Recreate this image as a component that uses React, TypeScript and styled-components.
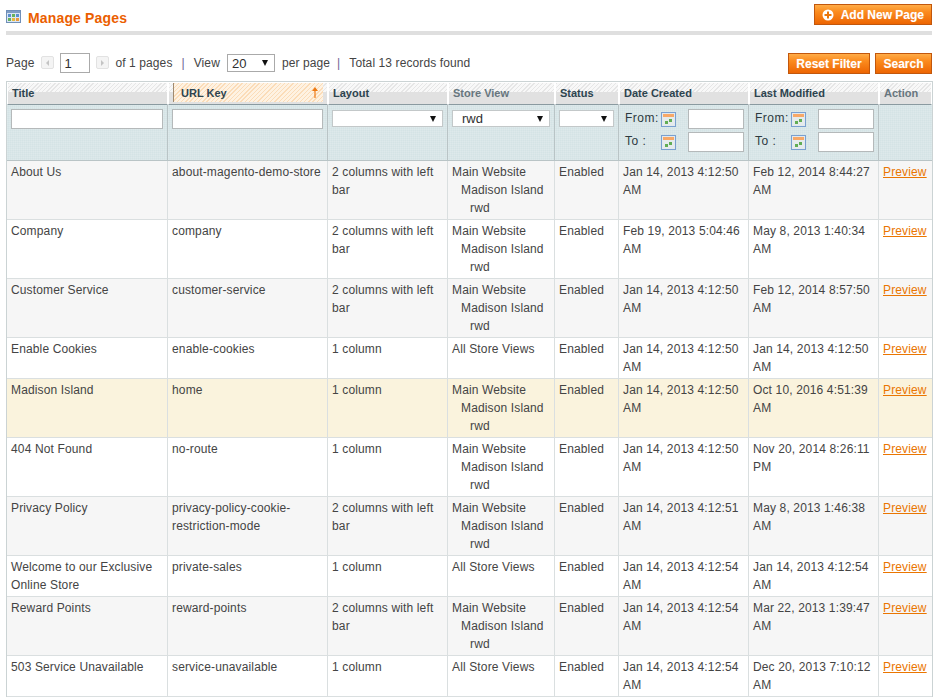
import React, { FC } from 'react';
import styled, { createGlobalStyle } from 'styled-components';

type PageRow = {
  title: string;
  urlKey: string;
  layout: string;
  stores: string[];
  created: string;
  modified: string;
  tint?: 'plain' | 'even' | 'home';
};

const MAIN_STORE = ['Main Website', 'Madison Island', 'rwd'];
const ALL_STORES = ['All Store Views'];
const TWO_COL = '2 columns with left bar';

const pages: PageRow[] = [
  { title: 'About Us', urlKey: 'about-magento-demo-store', layout: TWO_COL, stores: MAIN_STORE, created: 'Jan 14, 2013 4:12:50 AM', modified: 'Feb 12, 2014 8:44:27 AM', tint: 'even' },
  { title: 'Company', urlKey: 'company', layout: TWO_COL, stores: MAIN_STORE, created: 'Feb 19, 2013 5:04:46 AM', modified: 'May 8, 2013 1:40:34 AM' },
  { title: 'Customer Service', urlKey: 'customer-service', layout: TWO_COL, stores: MAIN_STORE, created: 'Jan 14, 2013 4:12:50 AM', modified: 'Feb 12, 2014 8:57:50 AM', tint: 'even' },
  { title: 'Enable Cookies', urlKey: 'enable-cookies', layout: '1 column', stores: ALL_STORES, created: 'Jan 14, 2013 4:12:50 AM', modified: 'Jan 14, 2013 4:12:50 AM' },
  { title: 'Madison Island', urlKey: 'home', layout: '1 column', stores: MAIN_STORE, created: 'Jan 14, 2013 4:12:50 AM', modified: 'Oct 10, 2016 4:51:39 AM', tint: 'home' },
  { title: '404 Not Found', urlKey: 'no-route', layout: '1 column', stores: MAIN_STORE, created: 'Jan 14, 2013 4:12:50 AM', modified: 'Nov 20, 2014 8:26:11 PM' },
  { title: 'Privacy Policy', urlKey: 'privacy-policy-cookie-restriction-mode', layout: TWO_COL, stores: MAIN_STORE, created: 'Jan 14, 2013 4:12:51 AM', modified: 'May 8, 2013 1:46:38 AM', tint: 'even' },
  { title: 'Welcome to our Exclusive Online Store', urlKey: 'private-sales', layout: '1 column', stores: ALL_STORES, created: 'Jan 14, 2013 4:12:54 AM', modified: 'Jan 14, 2013 4:12:54 AM' },
  { title: 'Reward Points', urlKey: 'reward-points', layout: TWO_COL, stores: MAIN_STORE, created: 'Jan 14, 2013 4:12:54 AM', modified: 'Mar 22, 2013 1:39:47 AM', tint: 'even' },
  { title: '503 Service Unavailable', urlKey: 'service-unavailable', layout: '1 column', stores: ALL_STORES, created: 'Jan 14, 2013 4:12:54 AM', modified: 'Dec 20, 2013 7:10:12 AM' },
];

const columnWidths = [161, 160, 120, 107, 64, 130, 130, 53];

const GlobalStyle = createGlobalStyle`
  html, body {
    margin: 0;
    padding: 0;
    background: #fff;
    overflow: hidden;
  }
  body {
    font: 12px/18px "Liberation Sans", Arial, sans-serif;
    color: #444;
  }
`;

const Page = styled.div`
  width: 926px;
  height: 700px;
  padding: 0 8px 0 6px;
  overflow: hidden;
`;

const TitleBar = styled.div`
  display: flex;
  justify-content: space-between;
  align-items: flex-start;
  height: 27px;
  padding-top: 4px;
  border-bottom: 4px solid #dfdfdf;
`;

const Heading = styled.div`
  display: flex;
  align-items: center;
  gap: 7px;
  height: 20px;
  margin-top: 4px;
`;

const HeadingText = styled.h3`
  margin: 0;
  font-size: 14px;
  line-height: 18px;
  font-weight: 700;
  letter-spacing: 0.15px;
  color: #eb5e00;
`;

const GridIconSvg = styled.svg`
  margin-bottom: 3px;
`;

const OrangeButton = styled.button`
  display: inline-flex;
  align-items: center;
  justify-content: center;
  gap: 7px;
  height: 21px;
  padding: 0 7px;
  box-sizing: border-box;
  border: 1px solid #c2570c;
  background: linear-gradient(#ffac47 0%, #fb8c1f 35%, #ed6502 100%);
  color: #fff;
  font: 700 12px/18px "Liberation Sans", Arial, sans-serif;
  text-shadow: 0 0 1px rgba(255, 255, 255, 0.35);
`;

const ResetButton = styled(OrangeButton)`
  width: 82px;
  padding: 0;
`;

const SearchButton = styled(OrangeButton)`
  width: 57px;
  padding: 0;
`;

const PagerRow = styled.div`
  display: flex;
  justify-content: space-between;
  align-items: center;
  height: 27px;
  margin-top: 15px;
`;

const Pager = styled.div`
  display: flex;
  align-items: center;
  height: 22px;
  margin-bottom: 2px;
  letter-spacing: 0.1px;
`;

const PagerArrow = styled.span<{ $first?: boolean }>`
  display: inline-flex;
  align-items: center;
  justify-content: center;
  width: 11px;
  height: 11px;
  border: 1px solid #e2e2e2;
  border-radius: 2px;
  background: #f4f4f4;
  margin: 0 6px 0 ${p => (p.$first ? 7 : 0)}px;
`;

const PageInput = styled.div`
  width: 25px;
  height: 18px;
  border: 1px solid #aaa;
  padding-left: 3px;
  margin: 0 6px 0 0;
  color: #2f2f2f;
  font-size: 13px;
  line-height: 19px;
  background: #fff;
`;

const PerPage = styled.div`
  position: relative;
  width: 42px;
  height: 16px;
  border: 1px solid #aaa;
  padding-left: 4px;
  margin: 0 7px;
  font-size: 13px;
  line-height: 17px;
  color: #2f2f2f;
  background: #fff;
`;

const Separator = styled.span<{ $left: number; $right: number }>`
  margin: 0 ${p => p.$right}px 0 ${p => p.$left}px;
  color: #6f5f95;
`;

const FilterButtons = styled.div`
  display: flex;
  gap: 5px;
`;

const SelectArrow = styled.i`
  position: absolute;
  top: 5px;
  right: 6px;
  width: 0;
  height: 0;
  border-left: 3.5px solid transparent;
  border-right: 3.5px solid transparent;
  border-top: 6px solid #111;
`;

const Grid = styled.table`
  margin-top: 4px;
  width: 926px;
  table-layout: fixed;
  border-collapse: separate;
  border-spacing: 0;
  border-left: 1px solid #cbd3d4;
  border-right: 1px solid #cbd3d4;
  border-top: 1px solid #cbd3d4;
`;

const HeadCell = styled.th<{ $muted?: boolean }>`
  position: relative;
  height: 23px;
  padding: 0 0 0 4px;
  box-sizing: border-box;
  text-align: left;
  font-size: 11px;
  line-height: 21px;
  font-weight: 700;
  color: ${p => (p.$muted ? '#67767e' : '#2d444f')};
  background:
    linear-gradient(transparent 9px, #e1e1e1 9px),
    repeating-linear-gradient(135deg, #e6e6e6 0 1px, #f8f8f8 1px 3px);
  border-left: 1px solid #fff;
  border-right: 1px solid #fff;
  border-top: 1px solid #fff;
  border-bottom: 1px solid #8a9aa0;
`;

const SortedLabel = styled.div`
  position: absolute;
  top: 0;
  left: 4px;
  right: 4px;
  bottom: 2px;
  padding-left: 7px;
  line-height: 21px;
  color: #2d444f;
  border-left: 1px solid #a08a70;
  background: repeating-linear-gradient(135deg, #fbdcb8 0 1px, #fef2e2 1px 3px);
`;

const SortArrow = styled.svg`
  position: absolute;
  top: 4px;
  right: 5px;
`;

const FilterCell = styled.th`
  height: 56px;
  padding: 4px 4px 0 4px;
  box-sizing: border-box;
  vertical-align: top;
  font-weight: 400;
  text-align: left;
  background:
    repeating-linear-gradient(0deg, rgba(255, 255, 255, 0.12) 0 1px, transparent 1px 2px),
    repeating-linear-gradient(90deg, rgba(255, 255, 255, 0.12) 0 1px, transparent 1px 2px),
    #d4e3e5;
  border-right: 1px solid #b9c4c6;
  border-bottom: 1px solid #b9c4c6;
  &:last-child {
    border-right: 0;
  }
`;

const FilterInput = styled.div<{ $width?: number }>`
  width: ${p => (p.$width ? `${p.$width}px` : '100%')};
  height: 20px;
  box-sizing: border-box;
  border: 1px solid #b5b9ba;
  background: #fff;
`;

const FilterSelect = styled.div<{ $width: number }>`
  position: relative;
  width: ${p => p.$width}px;
  height: 17px;
  margin-top: 1px;
  padding-left: 9px;
  box-sizing: border-box;
  border: 1px solid #c3c8c9;
  background: #fff;
  color: #2f2f2f;
  font-size: 13px;
  line-height: 16px;
`;

const DateLine = styled.div`
  display: flex;
  align-items: center;
  height: 20px;
  margin-bottom: 3px;
  padding-left: 2px;
`;

const DateLabel = styled.span`
  width: 36px;
  padding-bottom: 2px;
  font-size: 12px;
  font-weight: 400;
  letter-spacing: 0.5px;
  color: #2d3a40;
`;

const DateField = styled(FilterInput)`
  margin-left: 12px;
`;

const BodyCell = styled.td<{ $tint?: PageRow['tint'] }>`
  padding: 2px 4px 2px 4px;
  vertical-align: top;
  letter-spacing: 0.14px;
  overflow-wrap: break-word;
  border-right: 1px solid #dadfe0;
  border-bottom: 1px solid #dadfe0;
  background: ${p => (p.$tint === 'home' ? '#faf3dd' : p.$tint === 'even' ? '#f6f6f6' : '#fff')};
  &:last-child {
    border-right: 0;
  }
`;

const StoreLine = styled.div<{ $depth: number }>`
  padding-left: ${p => p.$depth * 9}px;
`;

const PreviewLink = styled.a`
  color: #ea7601;
  text-decoration: underline;
`;

const GridIcon: FC = () => (
  <GridIconSvg width="15" height="13" viewBox="0 0 15 13">
    <rect x="0.5" y="0.5" width="14" height="12" fill="#dbe6f4" stroke="#6f8fb8" />
    <rect x="1" y="1" width="13" height="2" fill="#7f9cc4" />
    <rect x="2" y="4" width="3" height="3" fill="#5a8fd0" />
    <rect x="6" y="4" width="3" height="3" fill="#68b25a" />
    <rect x="10" y="4" width="3" height="3" fill="#5a8fd0" />
    <rect x="2" y="8" width="3" height="3" fill="#68b25a" />
    <rect x="6" y="8" width="3" height="3" fill="#e8b93e" />
    <rect x="10" y="8" width="3" height="3" fill="#e89a3e" />
  </GridIconSvg>
);

const PlusIcon: FC = () => (
  <svg width="12" height="12" viewBox="0 0 12 12">
    <circle cx="6" cy="6" r="5.5" fill="#fff" />
    <rect x="2.5" y="5" width="7" height="2" fill="#e9760c" />
    <rect x="5" y="2.5" width="2" height="7" fill="#e9760c" />
  </svg>
);

const CalendarIcon: FC = () => (
  <svg width="15" height="15" viewBox="0 0 15 15">
    <rect x="0.5" y="0.5" width="14" height="14" fill="#e3e9ee" stroke="#7aa0d0" />
    <rect x="2" y="2" width="11" height="3" fill="#f7a868" />
    <rect x="2" y="5" width="11" height="8" fill="#e6ebec" />
    <rect x="4" y="9" width="3" height="3" fill="#62ad55" />
    <rect x="8" y="7" width="3" height="3" fill="#62ad55" />
  </svg>
);

const ArrowBox: FC<{ dir: 'left' | 'right' }> = ({ dir }) => (
  <PagerArrow $first={dir === 'left'}>
    <svg width="5" height="6" viewBox="0 0 5 6">
      <path d={dir === 'left' ? 'M4 0 L1 3 L4 6 Z' : 'M1 0 L4 3 L1 6 Z'} fill="#c4c4c4" />
    </svg>
  </PagerArrow>
);

const DateFilter: FC = () => (
  <>
    <DateLine>
      <DateLabel>From:</DateLabel>
      <CalendarIcon />
      <DateField $width={56} />
    </DateLine>
    <DateLine>
      <DateLabel>To :</DateLabel>
      <CalendarIcon />
      <DateField $width={56} />
    </DateLine>
  </>
);

const App: FC = () => (
  <Page>
    <GlobalStyle />
    <TitleBar>
      <Heading>
        <GridIcon />
        <HeadingText>Manage Pages</HeadingText>
      </Heading>
      <OrangeButton>
        <PlusIcon />
        Add New Page
      </OrangeButton>
    </TitleBar>

    <PagerRow>
      <Pager>
        Page
        <ArrowBox dir="left" />
        <PageInput>1</PageInput>
        <ArrowBox dir="right" />
        of 1 pages
        <Separator $left={9} $right={9}>|</Separator>
        View
        <PerPage>
          20
          <SelectArrow />
        </PerPage>
        per page
        <Separator $left={7} $right={9}>|</Separator>
        Total 13 records found
      </Pager>
      <FilterButtons>
        <ResetButton>Reset Filter</ResetButton>
        <SearchButton>Search</SearchButton>
      </FilterButtons>
    </PagerRow>

    <Grid>
      <colgroup>
        {columnWidths.map((w, i) => (
          <col key={i} style={{ width: w }} />
        ))}
      </colgroup>
      <thead>
        <tr>
          <HeadCell>Title</HeadCell>
          <HeadCell>
            <SortedLabel>
              URL Key
              <SortArrow width="6" height="11" viewBox="0 0 6 11">
                <path d="M3 0 L6 4 L3.6 4 L3.6 11 L2.4 11 L2.4 4 L0 4 Z" fill="#ee7a14" />
              </SortArrow>
            </SortedLabel>
          </HeadCell>
          <HeadCell>Layout</HeadCell>
          <HeadCell $muted>Store View</HeadCell>
          <HeadCell>Status</HeadCell>
          <HeadCell>Date Created</HeadCell>
          <HeadCell>Last Modified</HeadCell>
          <HeadCell $muted>Action</HeadCell>
        </tr>
        <tr>
          <FilterCell><FilterInput /></FilterCell>
          <FilterCell><FilterInput /></FilterCell>
          <FilterCell>
            <FilterSelect $width={111}><SelectArrow /></FilterSelect>
          </FilterCell>
          <FilterCell>
            <FilterSelect $width={98}>
              rwd
              <SelectArrow />
            </FilterSelect>
          </FilterCell>
          <FilterCell>
            <FilterSelect $width={55}><SelectArrow /></FilterSelect>
          </FilterCell>
          <FilterCell><DateFilter /></FilterCell>
          <FilterCell><DateFilter /></FilterCell>
          <FilterCell />
        </tr>
      </thead>
      <tbody>
        {pages.map(page => (
          <tr key={page.urlKey}>
            <BodyCell $tint={page.tint}>{page.title}</BodyCell>
            <BodyCell $tint={page.tint}>{page.urlKey}</BodyCell>
            <BodyCell $tint={page.tint}>{page.layout}</BodyCell>
            <BodyCell $tint={page.tint}>
              {page.stores.map((store, i) => (
                <StoreLine key={store} $depth={i === 2 ? 2 : i}>{store}</StoreLine>
              ))}
            </BodyCell>
            <BodyCell $tint={page.tint}>Enabled</BodyCell>
            <BodyCell $tint={page.tint}>{page.created}</BodyCell>
            <BodyCell $tint={page.tint}>{page.modified}</BodyCell>
            <BodyCell $tint={page.tint}><PreviewLink>Preview</PreviewLink></BodyCell>
          </tr>
        ))}
      </tbody>
    </Grid>
  </Page>
);

export default App;
